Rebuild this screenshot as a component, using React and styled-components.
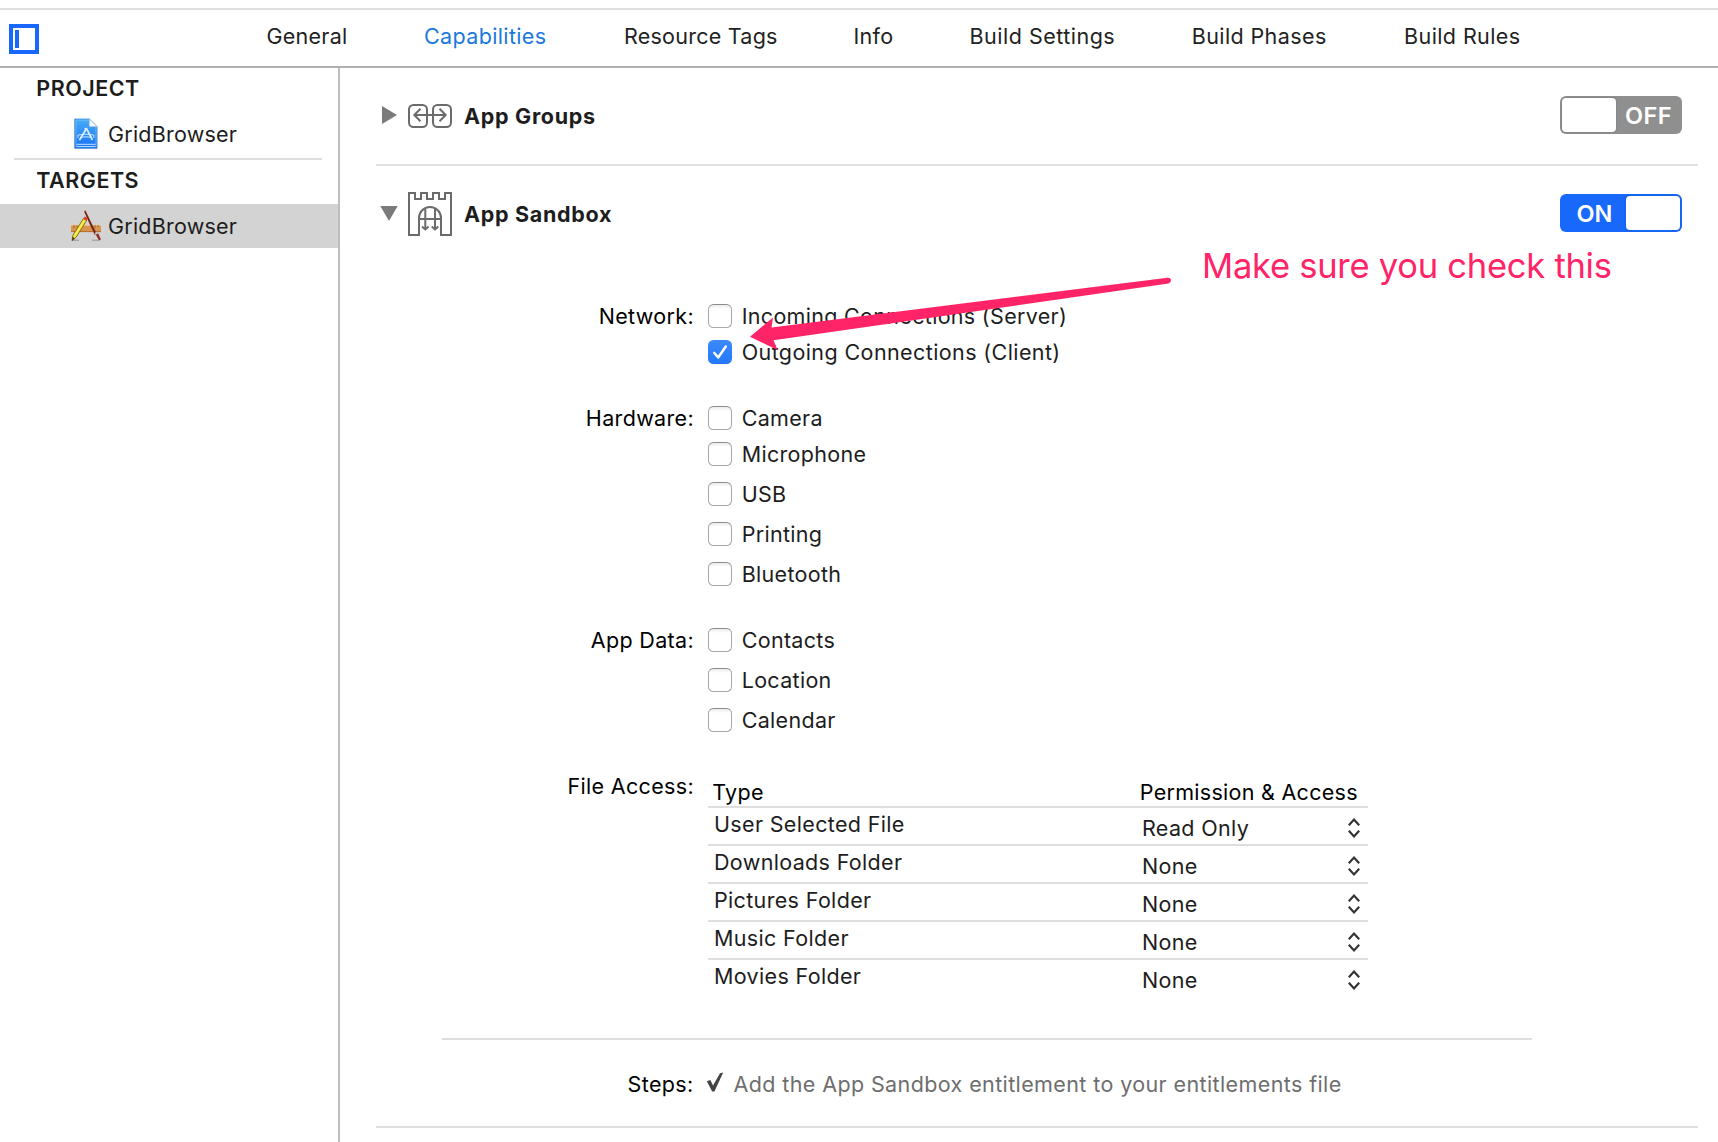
import React from 'react';
import styled, { createGlobalStyle, css } from 'styled-components';

const GlobalStyle = createGlobalStyle`
  * { box-sizing: border-box; }
  body {
    margin: 0;
    background: #fff;
    overflow: hidden;
    color: #1d1d1d;
    font-family: Inter, "Liberation Sans", sans-serif;
    font-size: 21.5px;
    letter-spacing: 0.34px;
    white-space: nowrap;
  }
`;

const Page = styled.div`
  position: relative;
  display: flex;
  flex-direction: column;
  width: 1718px;
  height: 1142px;
  padding-top: 8px;
`;

const Header = styled.header`
  display: flex;
  align-items: center;
  height: 60px;
  flex: none;
  padding-left: 9px;
  border-top: 2px solid #e0e0e0;
  border-bottom: 2px solid #b0b0b0;
`;

const PanelToggle = styled.button`
  width: 30px;
  height: 30px;
  margin: 2px 227.5px 0 0;
  padding: 2px;
  display: flex;
  background: #fff;
  border: 4px solid #1768fb;

  &::before {
    content: '';
    width: 4px;
    height: 18px;
    background: #1768fb;
  }
`;

const Tabs = styled.nav`
  display: flex;
  padding-bottom: 4px;
`;

const Tab = styled.a`
  width: ${(p) => p.$width}px;
  line-height: 28px;
  letter-spacing: ${(p) => p.$tracking}px;
  color: ${(p) => (p.$active ? '#1b78dc' : '#222')};
`;

const Body = styled.div`
  display: flex;
  flex: 1;
  min-height: 0;
`;

const Sidebar = styled.aside`
  width: 340px;
  border-right: 2px solid #bebebe;
`;

const SidebarHeading = styled.h2`
  margin: 0 0 4px;
  padding-left: 36.3px;
  font-size: inherit;
  font-weight: 600;
  line-height: 40px;
  letter-spacing: 0.5px;
`;

const SidebarItem = styled.div`
  display: flex;
  align-items: center;
  gap: 6px;
  height: 44px;
  padding-left: 70px;
  letter-spacing: 0.22px;
  background: ${(p) => (p.$selected ? '#d3d3d3' : 'transparent')};
`;

const SidebarDivider = styled.div`
  height: 2px;
  margin: 2px 16px 0 14px;
  background: #dedede;
`;

const Main = styled.main`
  flex: 1;
  padding: 0 20px 0 36px;
`;

const Section = styled.section`
  border-bottom: 2px solid #e0e0e0;
`;

const SectionHeader = styled.div`
  display: flex;
  align-items: center;
  height: 94px;
  margin-bottom: ${(p) => (p.$open ? 0 : 2)}px;
  padding: 0 16px 0 4px;
`;

const Disclosure = styled.svg`
  width: 18px;
  height: 18px;
  margin-right: 10px;
  fill: #7b7b7b;
`;

const CapabilityIcon = styled.svg`
  width: 44px;
  height: ${(p) => p.$height}px;
  margin: 2px 12px 0 0;
  fill: none;
  stroke: #6b6b6b;
  stroke-width: 2;
`;

const SectionTitle = styled.h3`
  flex: 1;
  margin: 1px 0 0;
  font-size: inherit;
  font-weight: 700;
  letter-spacing: 0.7px;
`;

const Switch = styled.button`
  display: flex;
  flex-direction: ${(p) => (p.$on ? 'row-reverse' : 'row')};
  width: 122px;
  height: 38px;
  padding: 2px;
  border: 0;
  border-radius: 6px;
  background: ${(p) => (p.$on ? '#1768fb' : '#8f8f8f')};
  color: #fff;
  font: 600 23.5px/34px Inter, "Liberation Sans", sans-serif;
  letter-spacing: ${(p) => (p.$on ? 0 : 0.5)}px;
`;

const Knob = styled.span`
  width: 54px;
  height: 34px;
  border-radius: 4px;
  background: #fff;
  box-shadow: 0 0 2px rgba(0, 0, 0, 0.22);
`;

const SwitchText = styled.span`
  flex: 1;
  padding-left: 1px;
  line-height: 35px;
  text-align: center;
`;

const Form = styled.div`
  display: flex;
  flex-direction: column;
  gap: 42px;
  padding-top: 44px;
`;

const Field = styled.div`
  display: grid;
  grid-template-columns: 318px auto;
  column-gap: 14px;
  justify-content: start;
`;

const FieldLabel = styled.div`
  color: #000;
  line-height: 24px;
  text-align: right;
`;

const Options = styled.div`
  display: flex;
  flex-direction: column;
`;

const Option = styled.label`
  display: flex;
  align-items: center;
  gap: 9.7px;
  height: 24px;
  margin-top: ${(p) => p.$space}px;
  letter-spacing: ${(p) => p.$tracking || 0.31}px;
`;

const Box = styled.span`
  width: 24px;
  height: 24px;
  border-radius: 5.5px;
  ${(p) =>
    p.$checked
      ? css`
          background: linear-gradient(#3c8afa, #2378fb);
        `
      : css`
          border: 1.5px solid #a8a8a8;
          border-top-color: #8c8c8c;
          background: linear-gradient(#ececec, #fff 4px);
        `}
`;

const Tick = styled.svg`
  display: block;
  fill: none;
  stroke: #fff;
  stroke-width: 2.4;
  stroke-linecap: round;
  stroke-linejoin: round;
`;

const Table = styled.div`
  width: 660px;
`;

const TableHead = styled.div`
  display: grid;
  grid-template-columns: 427.5px auto;
  height: 34px;
  padding: 4px 0 0 4.3px;
  line-height: 28px;
  letter-spacing: 0.28px;
  color: #000;
  border-bottom: 2px solid #dedede;
`;

const TableRow = styled.div`
  display: grid;
  grid-template-columns: 428px auto;
  height: 38px;
  padding: 0 8px 0 6px;
  line-height: 32px;
  border-bottom: 2px solid #dedede;

  &:last-child {
    height: 36px;
    border-bottom: 0;
  }
`;

const Select = styled.div`
  display: flex;
  align-items: center;
  justify-content: space-between;
  height: 32px;
  margin-top: 4px;
`;

const Chevrons = styled.svg`
  fill: none;
  stroke: #333;
  stroke-width: 2.2;
`;

const StepsDivider = styled.div`
  width: 1090px;
  height: 2px;
  margin: 42px 0 32px 66px;
  background: #dedede;
`;

const Steps = styled.div`
  display: flex;
  height: 24px;
  margin-bottom: 30px;
  line-height: 24px;
`;

const StepsLabel = styled(FieldLabel)`
  width: 317.5px;
`;

const StepMark = styled.svg`
  margin: 0 10px 0 12px;
  fill: #444;
`;

const StepText = styled.span`
  color: #6e6e6e;
  letter-spacing: 0.39px;
`;

const Callout = styled.div`
  position: absolute;
  left: 1202px;
  top: 245px;
  color: #ff2467;
  font-size: 34.5px;
  line-height: 42px;
  letter-spacing: -0.25px;
`;

const CalloutArrow = styled.svg`
  position: absolute;
  left: 740px;
  top: 270px;
  fill: #ff2467;
`;

const tabs = [
  { name: 'General', width: 157.5, tracking: 0.26 },
  { name: 'Capabilities', width: 200, tracking: 0.36, active: true },
  { name: 'Resource Tags', width: 229.5, tracking: 0.24 },
  { name: 'Info', width: 116, tracking: 0.3 },
  { name: 'Build Settings', width: 222.2, tracking: 0.5 },
  { name: 'Build Phases', width: 212.4, tracking: 0.4 },
  { name: 'Build Rules', width: 130, tracking: 0.4 },
];

const fields = [
  {
    label: 'Network:',
    options: [
      { name: 'Incoming Connections (Server)', space: 0 },
      { name: 'Outgoing Connections (Client)', space: 12, checked: true, tracking: 0.4 },
    ],
  },
  {
    label: 'Hardware:',
    options: [
      { name: 'Camera', space: 0 },
      { name: 'Microphone', space: 12 },
      { name: 'USB', space: 16 },
      { name: 'Printing', space: 16 },
      { name: 'Bluetooth', space: 16 },
    ],
  },
  {
    label: 'App Data:',
    options: [
      { name: 'Contacts', space: 0 },
      { name: 'Location', space: 16 },
      { name: 'Calendar', space: 16 },
    ],
  },
];

const files = [
  ['User Selected File', 'Read Only'],
  ['Downloads Folder', 'None'],
  ['Pictures Folder', 'None'],
  ['Music Folder', 'None'],
  ['Movies Folder', 'None'],
];

function ProjectIcon() {
  return (
    <svg width="32" height="32" viewBox="0 0 32 32">
      <defs>
        <linearGradient id="doc" x1="0" y1="0" x2="0" y2="1">
          <stop offset="0" stopColor="#48adf5" />
          <stop offset="1" stopColor="#1670f8" />
        </linearGradient>
      </defs>
      <path d="M4 .8h15.6l8 7.8V31H4z" fill="#a9b4c0" opacity=".6" />
      <path d="M4.8 1h14.6l7.6 7.6v21.6H4.8z" fill="url(#doc)" stroke="#2a78d4" strokeWidth=".6" />
      <path d="M6 29V2.2h12.8M26 9v20" fill="none" stroke="#7cc3fb" strokeWidth=".7" />
      <path d="M19.4 1v7.6H27z" fill="#f4f8fc" stroke="#b5c4d4" strokeWidth=".6" />
      <g fill="none" stroke="#d8efff">
        <path d="M14.6 10.8l2-.2 5.8 11.4M16.2 11L9.4 22.2" strokeWidth="1.7" />
        <path d="M8 20v-3q7.9-1.6 15.8 0v3M10 19.4q6-1.2 12 0" strokeWidth=".9" />
        <path d="M6.5 26.3h19M6.5 28.6h19" strokeWidth=".9" />
      </g>
    </svg>
  );
}

function TargetIcon() {
  return (
    <svg width="32" height="32" viewBox="0 0 32 32">
      <path d="M3 30.2h6M22 30.2h8" stroke="#999" strokeWidth="1.6" opacity=".7" />
      <path d="M1 15h30v7H1z" fill="#d9954f" />
      <path d="M1 15.4h30" stroke="#efbd84" />
      <path d="M1 21.6h30" stroke="#b4702f" />
      <path d="M4 15v3M7 15v2M10 15v3M22 15v2M25 15v3M28 15v2" stroke="#8d5524" strokeWidth=".8" />
      <path d="M14 1l1.6-.4 5.4 11.4 6 11.8-2.3 1.2-5.6-12z" fill="#9c3a22" />
      <path d="M15 2l10.6 22" stroke="#4d1c14" strokeWidth=".9" />
      <path d="M24.6 22.8l2.7-1.4 3.7 8.1-2 .8z" fill="#8c2f20" />
      <path d="M24.7 23l2.6-1.4.8 1.8-2.6 1.3z" fill="#c9c9c9" />
      <path d="M13.4 8.6l3.2 1.8L6.2 27.2 2 30.8l.8-5.4z" fill="#f5df24" stroke="#5a4a10" strokeWidth=".7" />
      <path d="M14.4 10.6L4.4 26.2" stroke="#fff79a" strokeWidth=".9" />
      <path d="M13.4 8.6l1.3-2.1 3.2 1.8-1.3 2.1z" fill="#e33a2c" />
      <path d="M2.6 27l2.4 1.2-3 2.6z" fill="#4b3418" />
    </svg>
  );
}

function ChevronPair() {
  return (
    <Chevrons width="12" height="20" viewBox="0 0 12 20">
      <path d="M.8 7.2L6 1.6l5.2 5.6M.8 12.8L6 18.4l5.2-5.6" />
    </Chevrons>
  );
}

export default function App() {
  return (
    <>
      <GlobalStyle />
      <Page>
        <Header>
          <PanelToggle aria-label="Toggle sidebar" />
          <Tabs>
            {tabs.map((t) => (
              <Tab key={t.name} $width={t.width} $tracking={t.tracking} $active={t.active}>
                {t.name}
              </Tab>
            ))}
          </Tabs>
        </Header>
        <Body>
          <Sidebar>
            <SidebarHeading>PROJECT</SidebarHeading>
            <SidebarItem>
              <ProjectIcon />
              GridBrowser
            </SidebarItem>
            <SidebarDivider />
            <SidebarHeading>TARGETS</SidebarHeading>
            <SidebarItem $selected>
              <TargetIcon />
              GridBrowser
            </SidebarItem>
          </Sidebar>
          <Main>
            <Section>
              <SectionHeader>
                <Disclosure viewBox="0 0 18 18">
                  <path d="M2 0l15 9-15 9z" />
                </Disclosure>
                <CapabilityIcon $height={24} viewBox="0 0 44 24">
                  <rect x="1" y="1" width="18" height="22" rx="4.5" />
                  <rect x="25" y="1" width="18" height="22" rx="4.5" />
                  <path d="M6 11h32M12.5 4.8L6.3 11l6.2 6.2M31.5 4.8l6.2 6.2-6.2 6.2" />
                </CapabilityIcon>
                <SectionTitle>App Groups</SectionTitle>
                <Switch>
                  <Knob />
                  <SwitchText>OFF</SwitchText>
                </Switch>
              </SectionHeader>
            </Section>
            <Section>
              <SectionHeader $open>
                <Disclosure viewBox="0 0 18 18">
                  <path d="M.3 2h17.4L9 17z" />
                </Disclosure>
                <CapabilityIcon $height={44} viewBox="0 0 44 44">
                  <path d="M1 1h6v6h6V1h6v6h6V1h6v6h6V1h6v42H33V26a11 11 0 0 0-22 0v17H1z" />
                  <path d="M11 27h22M17.3 17v20M27 17v20" />
                  <path d="M14 34.6l3.3 2.8 3.3-2.8M23.7 34.6l3.3 2.8 3.3-2.8" />
                </CapabilityIcon>
                <SectionTitle>App Sandbox</SectionTitle>
                <Switch $on>
                  <Knob />
                  <SwitchText>ON</SwitchText>
                </Switch>
              </SectionHeader>
              <Form>
                {fields.map((f) => (
                  <Field key={f.label}>
                    <FieldLabel>{f.label}</FieldLabel>
                    <Options>
                      {f.options.map((o) => (
                        <Option key={o.name} $space={o.space} $tracking={o.tracking}>
                          <Box $checked={o.checked}>
                            {o.checked && (
                              <Tick width="24" height="24" viewBox="0 0 24 24">
                                <path d="M6.2 12.8l4 4.7 7.6-11" />
                              </Tick>
                            )}
                          </Box>
                          {o.name}
                        </Option>
                      ))}
                    </Options>
                  </Field>
                ))}
                <Field>
                  <FieldLabel>File Access:</FieldLabel>
                  <Table>
                    <TableHead>
                      <span>Type</span>
                      <span>Permission &amp; Access</span>
                    </TableHead>
                    {files.map(([type, access]) => (
                      <TableRow key={type}>
                        <span>{type}</span>
                        <Select>
                          {access}
                          <ChevronPair />
                        </Select>
                      </TableRow>
                    ))}
                  </Table>
                </Field>
              </Form>
              <StepsDivider />
              <Steps>
                <StepsLabel>Steps:</StepsLabel>
                <StepMark width="18" height="22" viewBox="0 0 18 22">
                  <path d="M.8 9.2l3.6-1.2 2.6 5.4L14 1.2 17.2.6 8.4 19.4H6.2z" />
                </StepMark>
                <StepText>Add the App Sandbox entitlement to your entitlements file</StepText>
              </Steps>
            </Section>
          </Main>
        </Body>
        <CalloutArrow width="440" height="90" viewBox="740 270 440 90">
          <path d="M750 336.7L773 317.5 771.5 327.5 1167.5 277.8Q1171 277.6 1171 280.3T1168.5 283.5L773.5 340.3 777.5 350z" />
        </CalloutArrow>
        <Callout>Make sure you check this</Callout>
      </Page>
    </>
  );
}
